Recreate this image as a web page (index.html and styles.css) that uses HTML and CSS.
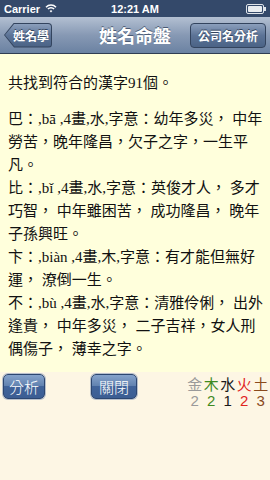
FILE: index.html
```html
<!DOCTYPE html>
<html lang="zh-Hant">
<head>
    <meta charset="UTF-8">
    <meta name="viewport" content="width=device-width, initial-scale=1.0">
    <title>姓名命盤</title>
    <link rel="stylesheet" href="styles.css">
</head>
<body>
    <div class="status-bar">
        <div class="carrier">
            Carrier
            <svg class="wifi" width="12" height="9" viewBox="0 0 12 9">
                <path d="M1 3.2 A7 7 0 0 1 11 3.2" fill="none" stroke="#fff" stroke-width="1.5"/>
                <path d="M2.9 5.1 A4.3 4.3 0 0 1 9.1 5.1" fill="none" stroke="#fff" stroke-width="1.5"/>
                <path d="M6 8.6 L4.6 7 A2 2 0 0 1 7.4 7 Z" fill="#fff"/>
            </svg>
        </div>
        <div class="clock">12:21 AM</div>
        <div class="battery"><span></span></div>
    </div>

    <div class="nav-bar">
        <a class="back-btn"><span>姓名學</span></a>
        <h1>姓名命盤</h1>
        <a class="nav-btn">公司名分析</a>
    </div>

    <div class="content">
        <p class="count">共找到符合的漢字91個。</p>
        <div class="entries">
            <p>巴：,bā ,4畫,水,字意：幼年多災， 中年<br>勞苦，晚年隆昌，欠子之字，一生平<br>凡。</p>
            <p>比：,bǐ ,4畫,水,字意：英俊才人， 多才<br>巧智， 中年雖困苦， 成功隆昌， 晚年<br>子孫興旺。</p>
            <p>卞：,biàn ,4畫,木,字意：有才能但無好<br>運， 潦倒一生。</p>
            <p>不：,bù ,4畫,水,字意：清雅伶俐， 出外<br>逢貴， 中年多災， 二子吉祥，女人刑<br>偶傷子， 薄幸之字。</p>
        </div>
    </div>

    <div class="bottom">
        <div class="buttons">
            <a class="btn">分析</a>
            <a class="btn wide">關閉</a>
        </div>
        <div class="elements">
            <span class="metal">金</span>
            <span class="wood">木</span>
            <span class="water">水</span>
            <span class="fire">火</span>
            <span class="earth">土</span>
            <span class="metal">2</span>
            <span class="wood">2</span>
            <span class="water">1</span>
            <span class="fire">2</span>
            <span class="earth">3</span>
        </div>
    </div>
</body>
</html>
```

FILE: styles.css
```css
body {
    margin: 0;
    width: 270px;
    height: 480px;
    overflow: hidden;
    background-color: #fdf6e4;
    font-family: "Liberation Sans", "Noto Sans CJK TC", sans-serif;
}

/* Status bar */
.status-bar {
    height: 17px;
    background-color: #34496a;
    color: #fff;
    font-size: 11px;
    font-weight: bold;
    display: grid;
    grid-template-columns: 1fr auto 1fr;
    align-items: center;
    padding: 0 4px;
}
.carrier {
    display: flex;
    align-items: center;
    gap: 5px;
}
.clock {
    text-align: center;
}
.battery {
    justify-self: end;
    width: 14px;
    height: 6px;
    border: 1px solid #dfe4ea;
    border-radius: 2px;
    padding: 1px;
    position: relative;
    margin-right: 2px;
}
.battery span {
    display: block;
    height: 100%;
    background-color: #e8ecf0;
    border-radius: 1px;
}
.battery::after {
    content: "";
    position: absolute;
    right: -3px;
    top: 2px;
    width: 2px;
    height: 4px;
    background-color: #dfe4ea;
}

/* Navigation bar */
.nav-bar {
    height: 36px;
    background: linear-gradient(#b3c0d2, #8799b4 50%, #6b82a2);
    border-bottom: 1px solid #2f3d52;
    display: grid;
    grid-template-columns: 1fr auto 1fr;
    align-items: center;
    padding: 0 4px;
}
.nav-bar h1 {
    margin: 0;
    color: #fff;
    font-size: 18px;
    font-weight: bold;
    text-shadow: 0 -1px 0 #4a5a73;
}
.back-btn {
    justify-self: start;
    height: 25px;
    width: 48px;
    padding: 1px;
    box-sizing: border-box;
    background-color: #33445e;
    clip-path: polygon(10px 0, 100% 0, 100% 100%, 10px 100%, 0 50%);
    border-radius: 0 4px 4px 0;
}
.back-btn span {
    display: flex;
    align-items: center;
    justify-content: center;
    height: 100%;
    padding-left: 6px;
    background: linear-gradient(#8b9fbc, #5c7396 50%, #4b6386);
    clip-path: polygon(9.5px 0, 100% 0, 100% 100%, 9.5px 100%, 0 50%);
    border-radius: 0 3px 3px 0;
    color: #fff;
    font-size: 12px;
    font-weight: bold;
    text-shadow: 0 -1px 0 #33445e;
}
.nav-btn {
    justify-self: end;
    height: 25px;
    box-sizing: border-box;
    padding: 0 7px;
    display: flex;
    align-items: center;
    border: 1px solid #33445e;
    border-radius: 4px;
    background: linear-gradient(#8b9fbc, #5c7396 50%, #4b6386);
    color: #fff;
    font-size: 12px;
    font-weight: bold;
    text-shadow: 0 -1px 0 #33445e;
}

/* Result text */
.content {
    height: 318px;
    box-sizing: border-box;
    background-color: #ffffdc;
    padding: 18px 8px 0;
    font-family: "Liberation Serif", "Noto Sans CJK TC", serif;
    font-size: 15px;
    line-height: 23px;
    color: #111;
    white-space: nowrap;
    overflow: hidden;
}
.content p {
    margin: 0;
}
.content .count {
    margin-bottom: 13px;
}

/* Bottom bar */
.bottom {
    display: flex;
    justify-content: space-between;
    padding: 2px 1px 0 3px;
}
.buttons {
    display: flex;
    gap: 46px;
}
.btn {
    width: 40px;
    height: 23px;
    display: flex;
    align-items: center;
    justify-content: center;
    border: 1px solid #2c4670;
    border-radius: 5px;
    box-shadow: 0 0 0 1px #b9c1cc;
    background: linear-gradient(#86a3cb, #5f80ae 50%, #40639a 50%, #3c5e93);
    color: #fff;
    font-family: "Noto Sans CJK TC", sans-serif;
    font-size: 15px;
    font-weight: 300;
}
.btn.wide {
    width: 44px;
}
.elements {
    display: grid;
    grid-template-columns: repeat(5, 16.5px);
    justify-items: center;
    font-size: 15px;
    line-height: 16px;
    padding-top: 3px;
}
.metal { color: #9a9a9a; }
.wood { color: #3f8a1f; }
.water { color: #1a1a1a; }
.fire { color: #e0241e; }
.earth { color: #8a4a1c; }
```
